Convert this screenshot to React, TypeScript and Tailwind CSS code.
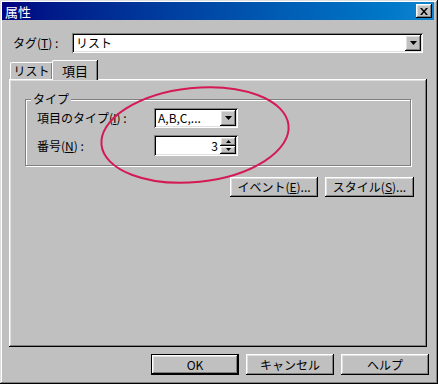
import React from 'react';

// classic 3D borders
const raised = 'shadow-[inset_-1px_-1px_#000,inset_1px_1px_#fff,inset_-2px_-2px_#808080,inset_2px_2px_#dfdfdf]';
const sunken = 'shadow-[inset_1px_1px_#808080,inset_-1px_-1px_#fff,inset_2px_2px_#000,inset_-2px_-2px_#dfdfdf]';

const Arrow = ({ up = false, small = false }: { up?: boolean; small?: boolean }) => (
  <svg width={small ? 5 : 7} height={small ? 3 : 4} viewBox={small ? '0 0 5 3' : '0 0 7 4'}>
    <polygon
      points={small ? (up ? '2.5,0 5,3 0,3' : '0,0 5,0 2.5,3') : '0,0 7,0 3.5,4'}
      fill="#000"
    />
  </svg>
);

const Combo = ({ value, className }: { value: string; className: string }) => (
  <div className={`flex items-center bg-white p-[2px] ${sunken} ${className}`}>
    <span className="flex-1 pl-[2px] text-black">{value}</span>
    <div className={`w-[16px] h-full bg-[#c0c0c0] flex items-center justify-center ${raised}`}>
      <Arrow />
    </div>
  </div>
);

const Button = ({ label, def = false, className = '' }: { label: React.ReactNode; def?: boolean; className?: string }) => (
  <div className={`${def ? 'border border-black' : ''} ${className}`}>
    <div className={`h-full bg-[#c0c0c0] flex items-center justify-center ${raised}`}>{label}</div>
  </div>
);

export default function App() {
  return (
    <div
      className="relative w-[438px] h-[384px] bg-[#c0c0c0] pt-[2px] pl-[2px] pr-[4px] flex flex-col text-[12px] leading-none text-black shadow-[inset_-1px_-1px_#000,inset_1px_1px_#dfdfdf,inset_-2px_-2px_#808080,inset_2px_2px_#fff] overflow-hidden"
      style={{ fontFamily: '"Noto Sans CJK JP", "Liberation Sans", sans-serif' }}
    >
      {/* title bar */}
      <div className="h-[18px] bg-gradient-to-r from-[#000080] to-[#1084d0] flex items-center justify-between pl-[3px] pr-[2px]">
        <span className="text-white text-[13px]">属性</span>
        <div className={`w-[16px] h-[14px] bg-[#c0c0c0] flex items-center justify-center ${raised}`}>
          <svg width="8" height="7" viewBox="0 0 8 7">
            <path d="M0 0h2l2 2.5L6 0h2L5 3.5 8 7H6L4 4.5 2 7H0l3-3.5z" fill="#000" />
          </svg>
        </div>
      </div>

      {/* tag row */}
      <div className="mt-[13px] flex items-center">
        <span className="ml-[11px] w-[59px]">
          タグ(<span className="underline">T</span>) :
        </span>
        <Combo value="リスト" className="w-[351px] h-[20px]" />
      </div>

      {/* tabs */}
      <div className="mt-[7px] ml-[7px] flex items-end h-[19px]">
        <div className="ml-[1px] h-[17px] w-[42px] bg-[#c0c0c0] flex items-center justify-center border-l border-t border-white rounded-tl-[2px] shadow-[inset_-1px_0_#808080,1px_0_#000]">
          リスト
        </div>
        <div className="relative z-10 -mb-px h-[20px] w-[45px] bg-[#c0c0c0] flex items-center justify-center border-l border-t border-white rounded-tl-[2px] shadow-[inset_-1px_0_#808080,1px_0_#000] text-[13px]">
          項目
        </div>
      </div>

      {/* tab panel */}
      <div className={`ml-[7px] w-[418px] h-[268px] bg-[#c0c0c0] pt-[20px] px-[16px] ${raised}`}>
        <div className="relative h-[67px] border border-[#808080] shadow-[inset_1px_1px_#fff,1px_1px_#fff] pt-[8px] pl-[11px] flex flex-col gap-[7px]">
          <span className="absolute -top-[7px] left-[5px] bg-[#c0c0c0] px-[2px]">タイプ</span>
          <div className="flex items-center">
            <span className="w-[117px]">
              項目のタイプ(<span className="underline">I</span>) :
            </span>
            <Combo value="A,B,C,..." className="w-[84px] h-[20px]" />
          </div>
          <div className="flex items-center">
            <span className="w-[117px]">
              番号(<span className="underline">N</span>) :
            </span>
            <div className={`w-[84px] h-[21px] bg-white p-[2px] flex ${sunken}`}>
              <span className="flex-1 text-right pr-[2px] self-center">3</span>
              <div className="w-[16px] flex flex-col">
                <div className={`flex-1 bg-[#c0c0c0] flex items-center justify-center ${raised}`}>
                  <Arrow up small />
                </div>
                <div className={`flex-1 bg-[#c0c0c0] flex items-center justify-center ${raised}`}>
                  <Arrow small />
                </div>
              </div>
            </div>
          </div>
        </div>

        <div className="mt-[11px] flex justify-end gap-[7px] pr-[-3px] mr-[-3px]">
          <Button
            className="w-[88px] h-[20px]"
            label={<span>イベント(<span className="underline">E</span>)...</span>}
          />
          <Button
            className="w-[89px] h-[20px]"
            label={<span>スタイル(<span className="underline">S</span>)...</span>}
          />
        </div>
      </div>

      {/* bottom buttons */}
      <div className="mt-[7px] flex gap-[7px] ml-[149px]">
        <Button def className="w-[88px] h-[21px]" label="OK" />
        <Button className="w-[88px] h-[21px]" label="キャンセル" />
        <Button className="w-[88px] h-[21px]" label="ヘルプ" />
      </div>

      {/* annotation ellipse */}
      <svg className="absolute left-0 top-0 pointer-events-none" width="438" height="384">
        <ellipse
          cx="195"
          cy="135"
          rx="94"
          ry="47"
          transform="rotate(-6 195 135)"
          fill="none"
          stroke="#d41a55"
          strokeWidth="2"
        />
      </svg>
    </div>
  );
}
